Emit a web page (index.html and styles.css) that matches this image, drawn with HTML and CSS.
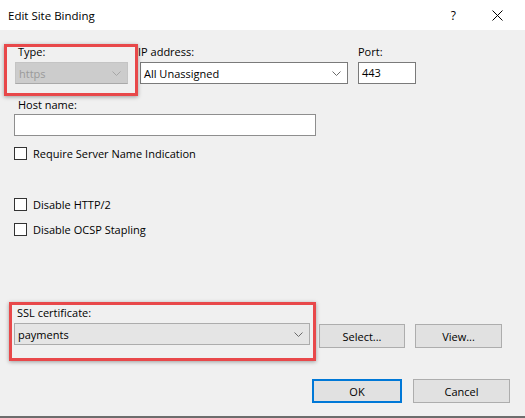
FILE: index.html
```html
<!DOCTYPE html>
<html lang="en">
<head>
  <meta charset="UTF-8">
  <meta name="viewport" content="width=device-width, initial-scale=1.0">
  <title>Edit Site Binding</title>
  <link rel="stylesheet" href="styles.css">
</head>

<body>
  <div class="dialog">
    <div class="titlebar">
      <span class="title">Edit Site Binding</span>
      <span class="help">?</span>
      <svg class="close" width="11" height="11" viewBox="0 0 11 11">
        <path d="M0.5 0.5 L10.5 10.5 M10.5 0.5 L0.5 10.5" stroke="#000" stroke-width="1" fill="none"/>
      </svg>
    </div>

    <div class="content">
      <div class="row-binding">
        <div class="field field-type">
          <label class="label">Type:</label>
          <div class="combo combo-disabled">
            <span>https</span>
            <svg class="chevron" width="9" height="5" viewBox="0 0 9 5"><polyline points="0.5,0.5 4.5,4.5 8.5,0.5" fill="none" stroke="currentColor"/></svg>
          </div>
        </div>
        <div class="field field-ip">
          <label class="label">IP address:</label>
          <div class="combo combo-edit">
            <span>All Unassigned</span>
            <svg class="chevron" width="9" height="5" viewBox="0 0 9 5"><polyline points="0.5,0.5 4.5,4.5 8.5,0.5" fill="none" stroke="currentColor"/></svg>
          </div>
        </div>
        <div class="field field-port">
          <label class="label">Port:</label>
          <div class="textbox">443</div>
        </div>
      </div>

      <div class="host">
        <label class="label">Host name:</label>
        <div class="textbox textbox-host"></div>
      </div>

      <div class="check check-sni"><span class="box"></span>Require Server Name Indication</div>
      <div class="check check-http2"><span class="box"></span>Disable HTTP/2</div>
      <div class="check check-ocsp"><span class="box"></span>Disable OCSP Stapling</div>

      <div class="cert">
        <label class="label">SSL certificate:</label>
        <div class="cert-row">
          <div class="combo combo-list">
            <span>payments</span>
            <svg class="chevron" width="9" height="5" viewBox="0 0 9 5"><polyline points="0.5,0.5 4.5,4.5 8.5,0.5" fill="none" stroke="currentColor"/></svg>
          </div>
          <button class="btn btn-select">Select...</button>
          <button class="btn btn-view">View...</button>
        </div>
      </div>

      <div class="actions">
        <button class="btn btn-ok">OK</button>
        <button class="btn btn-cancel">Cancel</button>
      </div>

      <!-- highlight frames drawn over the form -->
      <div class="mark mark-type"></div>
      <div class="mark mark-cert"></div>
    </div>
  </div>
</body>
</html>
```

FILE: styles.css
```css
* {
  box-sizing: border-box;
}

body {
  margin: 0;
  font-family: "Open Sans", "Liberation Sans", Arial, sans-serif;
  font-size: 11px;
  color: #000;
}

.dialog {
  width: 525px;
  height: 418px;
  display: flex;
  flex-direction: column;
}

.titlebar {
  height: 30px;
  background: #fff;
  display: flex;
  align-items: center;
  padding-left: 8px;
}

.titlebar .title {
  flex: 1;
  font-size: 11.5px;
}

.titlebar .help {
  font-size: 12px;
  margin-right: 36px;
}

.titlebar .close {
  margin-right: 22px;
}

.content {
  flex: 1;
  position: relative;
  background: #f0f0f0;
  padding-top: 14px;
  border-bottom: 2px solid #6d6d6d;
}

.label {
  display: block;
  height: 16px;
  line-height: 16px;
}

/* first row: type / ip / port */
.row-binding {
  display: flex;
  padding-left: 15px;
}

.field .label {
  margin-bottom: 2px;
}

.field-type {
  width: 113px;
  margin-right: 12px;
}
.field-type .label {
  padding-left: 3px;
}

.field-ip {
  width: 208px;
  margin-right: 10px;
}
.field-ip .label {
  margin-left: -2px;
}

.field-port {
  width: 58px;
}

.combo {
  height: 22px;
  display: flex;
  align-items: center;
  justify-content: space-between;
  padding: 0 6px 0 3px;
  border: 1px solid #7a7a7a;
  background: #fff;
  color: #000;
}

.combo .chevron {
  color: #6a6a6a;
}

.combo-disabled {
  background: #cccccc;
  border-color: #c4c4c4;
  border-bottom-color: #a9a9a9;
  color: #9a9a9a;
}
.combo-disabled .chevron {
  color: #a6a6a6;
}

.combo-list {
  width: 296px;
  background: #e5e5e5;
  border-color: #acacac;
}

.textbox {
  height: 22px;
  line-height: 20px;
  padding-left: 3px;
  border: 1px solid #7a7a7a;
  background: #fff;
}

/* host name */
.host {
  margin-top: 13px;
  padding-left: 14px;
}
.host .label {
  padding-left: 4px;
  margin-bottom: 1px;
}
.textbox-host {
  width: 302px;
  border-color: #8e8e8e;
}

/* checkboxes */
.check {
  display: flex;
  align-items: center;
  height: 17px;
  padding-left: 14px;
}
.check .box {
  width: 13px;
  height: 13px;
  border: 1px solid #333;
  background: #fff;
  margin-right: 6px;
}
.check-sni {
  margin-top: 9px;
}
.check-http2 {
  margin-top: 34px;
}
.check-ocsp {
  margin-top: 8px;
}

/* certificate */
.cert {
  margin-top: 67px;
  padding-left: 14px;
}
.cert .label {
  padding-left: 3px;
  margin-bottom: 2px;
}
.cert-row {
  display: flex;
  align-items: flex-start;
}

.btn {
  height: 24px;
  border: 1px solid #adadad;
  background: #e1e1e1;
  font-family: inherit;
  font-size: 11px;
  color: #000;
  padding: 0;
}

.btn-select {
  width: 86px;
  margin: 1px 0 0 9px;
}
.btn-view {
  width: 87px;
  margin: 1px 0 0 10px;
}

.actions {
  display: flex;
  justify-content: flex-end;
  margin-top: 31px;
  padding-right: 15px;
}
.btn-ok {
  width: 90px;
  margin-right: 11px;
  border: 2px solid #0078d7;
}
.btn-cancel {
  width: 97px;
}

.mark {
  position: absolute;
  border: 3px solid #e8484a;
  box-shadow: 0 1px 4px rgba(0, 0, 0, 0.35);
}
.mark-type {
  left: 4px;
  top: 14px;
  width: 134px;
  height: 52px;
}
.mark-cert {
  left: 9px;
  top: 272px;
  width: 307px;
  height: 59px;
}
```
